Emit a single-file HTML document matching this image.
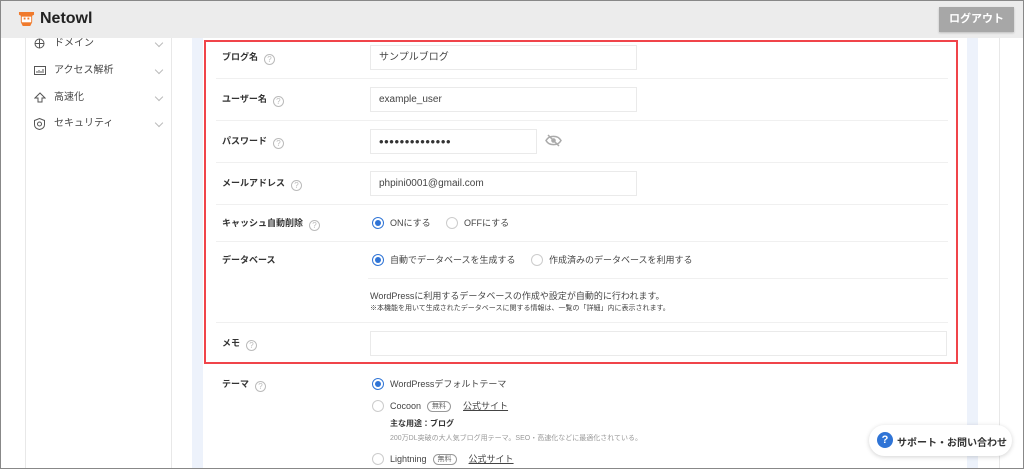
<!DOCTYPE html>
<html><head><meta charset="utf-8"><style>
*{box-sizing:border-box;margin:0;padding:0}
body{width:1024px;height:469px;overflow:hidden;background:#fff;font-family:"Liberation Sans","Noto Sans CJK JP",sans-serif;color:#333;position:relative}
.frame{position:absolute;inset:0;border:1px solid #888;z-index:20;pointer-events:none}
.hdr{position:absolute;left:0;top:0;width:1024px;height:38px;background:#ececec}
.btn{position:absolute;left:939px;top:7px;width:75px;height:25px;background:#a7a7a7;color:#fff;font-size:11px;font-weight:bold;text-align:center;line-height:25px;box-shadow:0 1px 2px rgba(0,0,0,.2)}
.abs{position:absolute}
.vl{position:absolute;top:38px;width:1px;height:431px;background:#e8e8e8}
.blue{position:absolute;top:38px;height:431px;background:#edf2fb}
.nav{position:absolute;left:34px;font-size:10px;color:#444;line-height:12px}
.nav span{position:absolute;left:20px;top:0;white-space:nowrap}
.chev{position:absolute;left:122px;top:2px;width:6px;height:6px;border-right:1px solid #bbb;border-bottom:1px solid #bbb;transform:rotate(45deg)}
.lbl{position:absolute;left:222px;font-size:9px;font-weight:bold;color:#333;white-space:nowrap;line-height:12px}
.q{display:inline-block;width:11px;height:11px;border:1px solid #bbb;border-radius:50%;font-size:8px;color:#bbb;text-align:center;line-height:9px;font-weight:normal;margin-left:6px;vertical-align:-2px;font-style:normal}
.hr{position:absolute;left:216px;width:732px;height:1px;background:#f0f0f0}
.inp{position:absolute;left:370px;height:25px;border:1px solid #eaeaea;font-size:10px;color:#444;padding-left:8px;line-height:23px}
.rad{position:absolute;font-size:9px;color:#444;white-space:nowrap;padding-left:18px;line-height:12px;height:12px}
.rad:before{content:"";position:absolute;left:0;top:0;width:12px;height:12px;border:1px solid #ccc;border-radius:50%;background:#fff;box-sizing:border-box}
.rad.on:before{border:1.5px solid #2f74d6}
.rad.on:after{content:"";position:absolute;left:3px;top:3px;width:6px;height:6px;border-radius:50%;background:#2f74d6}
.red{position:absolute;left:204px;top:40px;width:754px;height:324px;border:2px solid #f0444a}
.tag{display:inline-block;border:1px solid #999;border-radius:8px;font-size:7px;padding:0 4px;line-height:9px;margin:0 6px;color:#666;vertical-align:1px}
.lk{text-decoration:underline;font-size:9px;color:#444;margin-left:6px}
</style></head><body>
<div class="hdr"></div>
<svg class="abs" style="left:17px;top:11px" width="19" height="16" viewBox="0 0 20 17"><path d="M2 1h16v3l-2 1v7l-2 4H6l-2-4V5L2 4z" fill="#f07a2c"/><rect x="5" y="6" width="10" height="6" fill="#fff"/><rect x="7" y="7" width="2" height="2" fill="#f07a2c"/><rect x="11" y="7" width="2" height="2" fill="#f07a2c"/></svg>
<div class="abs" style="left:40px;top:10px;font-weight:bold;font-size:16px;color:#222">Netowl</div>
<div class="btn">ログアウト</div>

<div class="vl" style="left:25px"></div>
<div class="vl" style="left:171px"></div>
<div class="blue" style="left:192px;width:11px"></div>
<div class="blue" style="left:967px;width:11px"></div>
<div class="vl" style="left:999px"></div>

<div class="nav" style="top:38px"><svg class="abs" style="left:0;top:0" width="11" height="11"><circle cx="5.5" cy="5.5" r="4.5" fill="none" stroke="#555"/><path d="M1 5.5h9M5.5 1v9" stroke="#555"/></svg><span>ドメイン</span><i class="chev"></i></div>
<div class="nav" style="top:65px"><svg class="abs" style="left:0;top:1px" width="12" height="10"><rect x=".5" y=".5" width="11" height="8" fill="none" stroke="#555"/><path d="M3 7V5M5 7V4M7 7V5M9 7V3" stroke="#555"/></svg><span>アクセス解析</span><i class="chev"></i></div>
<div class="nav" style="top:92px"><svg class="abs" style="left:0;top:0" width="12" height="11"><path d="M6 1L1 6h3v4h4V6h3z" fill="none" stroke="#555"/></svg><span>高速化</span><i class="chev"></i></div>
<div class="nav" style="top:118px"><svg class="abs" style="left:0;top:0" width="11" height="12"><path d="M5.5 .5l5 2v4c0 3-2.5 4.5-5 5-2.5-.5-5-2-5-5v-4z" fill="none" stroke="#555"/><circle cx="5.5" cy="6" r="2" fill="none" stroke="#555"/></svg><span>セキュリティ</span><i class="chev"></i></div>

<div class="red"></div>
<div class="lbl" style="top:51px">ブログ名<i class="q">?</i></div>
<div class="inp" style="top:45px;width:267px">サンプルブログ</div>
<div class="hr" style="top:78px"></div>
<div class="lbl" style="top:93px">ユーザー名<i class="q">?</i></div>
<div class="inp" style="top:87px;width:267px">example_user</div>
<div class="hr" style="top:120px"></div>
<div class="lbl" style="top:135px">パスワード<i class="q">?</i></div>
<div class="inp" style="top:129px;width:167px;font-size:13px;letter-spacing:.6px;color:#333">••••••••••••••</div>
<svg class="abs" style="left:545px;top:134px" width="17" height="13"><path d="M1 6.5C4 1 13 1 16 6.5 13 12 4 12 1 6.5z" fill="none" stroke="#aaa" stroke-width="1.5"/><circle cx="8.5" cy="6.5" r="2.3" fill="#aaa"/><path d="M3 1l11 11" stroke="#aaa" stroke-width="1.5"/></svg>
<div class="hr" style="top:162px"></div>
<div class="lbl" style="top:177px">メールアドレス<i class="q">?</i></div>
<div class="inp" style="top:171px;width:267px">phpini0001@gmail.com</div>
<div class="hr" style="top:204px"></div>
<div class="lbl" style="top:217px">キャッシュ自動削除<i class="q">?</i></div>
<div class="rad on" style="left:372px;top:217px">ONにする</div>
<div class="rad" style="left:446px;top:217px">OFFにする</div>
<div class="hr" style="top:241px"></div>
<div class="lbl" style="top:254px">データベース</div>
<div class="rad on" style="left:372px;top:254px">自動でデータベースを生成する</div>
<div class="rad" style="left:531px;top:254px">作成済みのデータベースを利用する</div>
<div class="hr" style="top:278px;left:368px;width:580px"></div>
<div class="abs" style="left:370px;top:289px;font-size:9px;color:#444">WordPressに利用するデータベースの作成や設定が自動的に行われます。</div>
<div class="abs" style="left:370px;top:303px;font-size:7px;color:#444">※本機能を用いて生成されたデータベースに関する情報は、一覧の「詳細」内に表示されます。</div>
<div class="hr" style="top:322px"></div>
<div class="lbl" style="top:337px">メモ<i class="q">?</i></div>
<div class="inp" style="top:331px;width:577px"></div>

<div class="lbl" style="top:378px">テーマ<i class="q">?</i></div>
<div class="rad on" style="left:372px;top:378px">WordPressデフォルトテーマ</div>
<div class="rad" style="left:372px;top:400px">Cocoon<span class="tag">無料</span><span class="lk">公式サイト</span></div>
<div class="abs" style="left:390px;top:418px;font-size:8px;font-weight:bold;color:#333">主な用途：ブログ</div>
<div class="abs" style="left:390px;top:433px;font-size:7px;color:#999">200万DL突破の大人気ブログ用テーマ。SEO・高速化などに最適化されている。</div>
<div class="rad" style="left:372px;top:453px">Lightning<span class="tag">無料</span><span class="lk">公式サイト</span></div>

<div class="abs" style="left:869px;top:425px;width:143px;height:31px;background:#fff;border-radius:16px;box-shadow:0 1px 5px rgba(0,0,0,.18)"></div>
<div class="abs" style="left:877px;top:432px;width:16px;height:16px;border-radius:50%;background:#2f74d6;color:#fff;font-size:11px;font-weight:bold;text-align:center;line-height:16px">?</div>
<div class="abs" style="left:897px;top:434px;font-size:10px;font-weight:bold;color:#333">サポート・お問い合わせ</div>
<div class="frame"></div>
</body></html>
